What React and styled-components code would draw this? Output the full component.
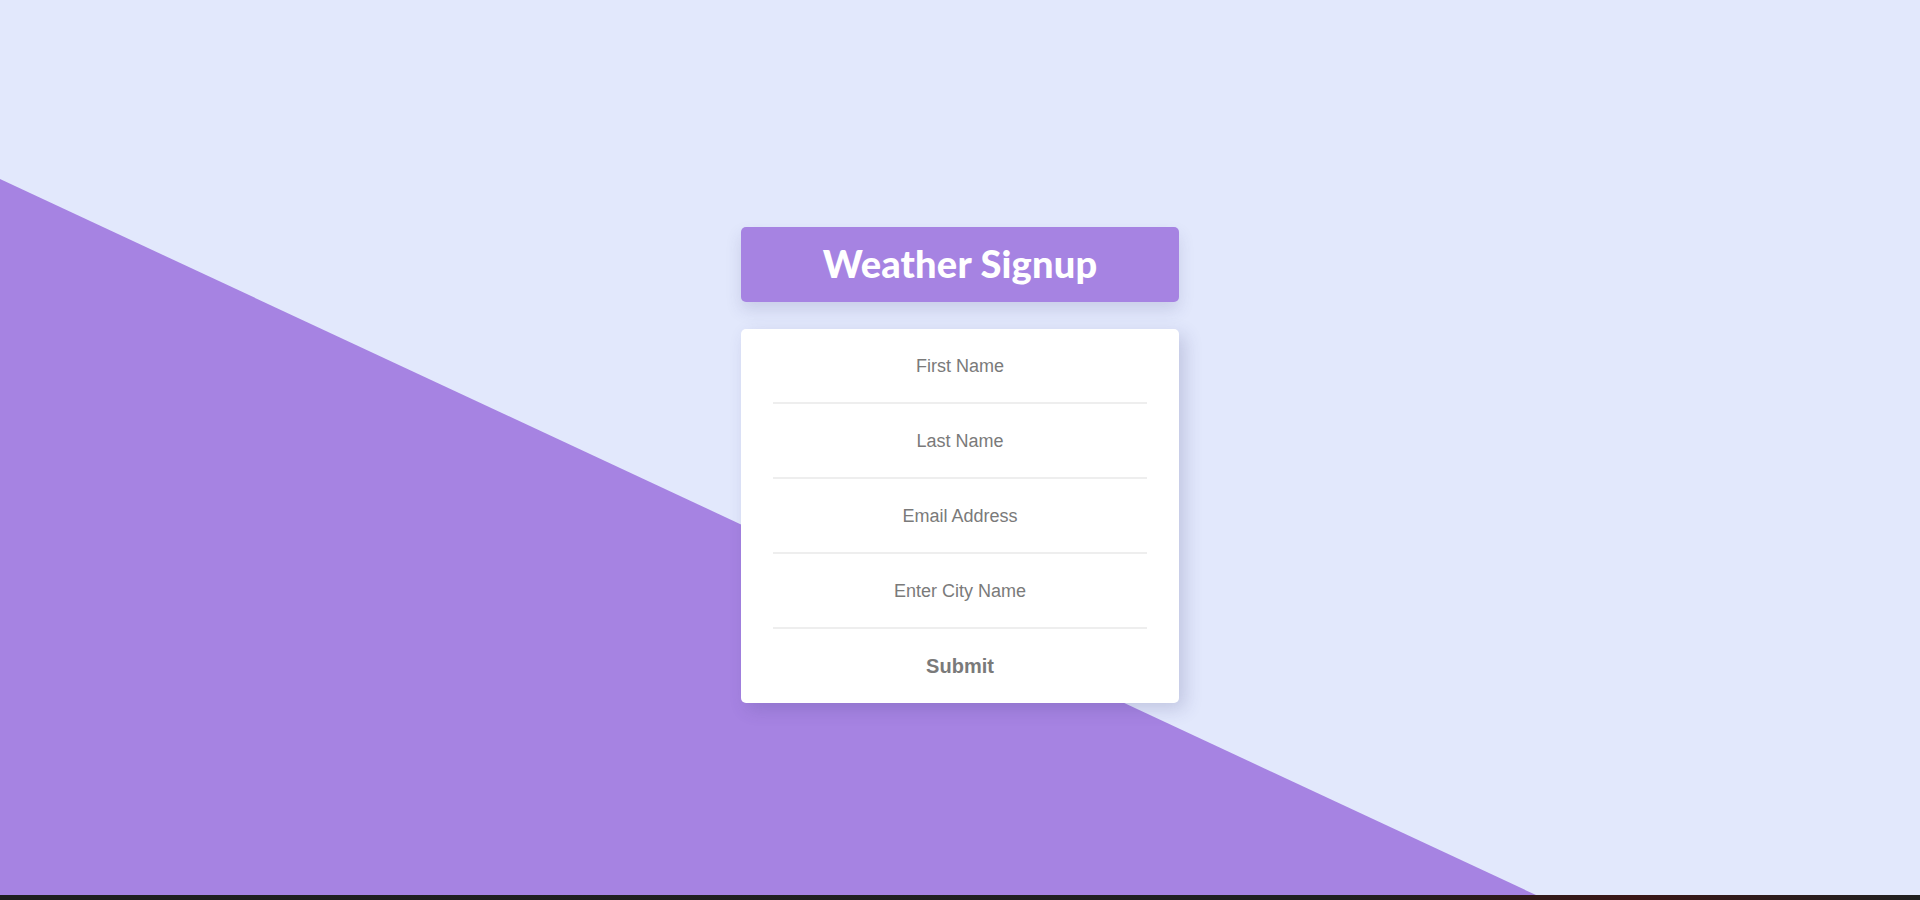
import React, { useState } from "react";
import styled, { createGlobalStyle } from "styled-components";

const GlobalStyle = createGlobalStyle`
    html, body {
        margin: 0;
        padding: 0;
        height: 100%;
        overflow: hidden;
    }
    #root {
        height: 100%;
    }
`;

export default function App() {
    const [data, setData] = useState({ first: "", last: "", email: "", city: "" });
    const changing = (e) => setData({ ...data, [e.target.name]: e.target.value });

    return (
        <Page>
            <GlobalStyle />
            <Main>
                <Backdrop />
                <Content>
                    <TitleBox>
                        <Title>Weather Signup</Title>
                    </TitleBox>
                    <Form onSubmit={(e) => e.preventDefault()}>
                        <Field name="first" placeholder="First Name" value={data.first} onChange={changing} />
                        <Field name="last" placeholder="Last Name" value={data.last} onChange={changing} />
                        <Field name="email" placeholder="Email Address" value={data.email} onChange={changing} />
                        <Field name="city" placeholder="Enter City Name" value={data.city} onChange={changing} />
                        <SubmitBtn type="submit">Submit</SubmitBtn>
                    </Form>
                </Content>
            </Main>
            <TaskStrip />
        </Page>
    );
}

const Page = styled.div`
    display: flex;
    flex-direction: column;
    height: 100vh;
`;

const Main = styled.main`
    position: relative;
    flex: 1;
    background-color: #e2e8fc;
    overflow: hidden;
`;

const Backdrop = styled.div`
    position: absolute;
    inset: 0;
    background-color: #a683e2;
    clip-path: polygon(0 20%, 80% 100%, 0 100%);
`;

const Content = styled.div`
    position: relative;
    display: flex;
    flex-direction: column;
    align-items: center;
    padding-top: 227px;
    gap: 27px;
`;

const TitleBox = styled.div`
    width: 438px;
    height: 75px;
    box-sizing: border-box;
    padding-bottom: 4px;
    display: flex;
    align-items: center;
    justify-content: center;
    background-color: #a683e2;
    border-radius: 5px;
    box-shadow: 0 8px 16px rgba(60, 60, 120, 0.15);
`;

const Title = styled.h1`
    margin: 0;
    font-family: "Lato", "DejaVu Sans", sans-serif;
    font-weight: 900;
    font-size: 38px;
    color: white;
    letter-spacing: 0.2px;
`;

const Form = styled.form`
    width: 438px;
    box-sizing: border-box;
    padding: 0 32px;
    display: flex;
    flex-direction: column;
    background-color: white;
    border-radius: 5px;
    box-shadow: 6px 6px 18px rgba(60, 60, 120, 0.2);
`;

const Field = styled.input`
    height: 75px;
    padding-top: 3px;
    box-sizing: border-box;
    border: none;
    border-bottom: 2px solid #eeeeee;
    outline: none;
    text-align: center;
    font-family: "Liberation Sans", Arial, sans-serif;
    font-size: 18px;
    color: #555;
    background: transparent;
    &::placeholder {
        color: #7a7a7a;
    }
`;

const SubmitBtn = styled.button`
    height: 74px;
    border: none;
    background: transparent;
    font-family: "Liberation Sans", Arial, sans-serif;
    font-weight: bold;
    font-size: 20px;
    color: #7a7a7a;
    cursor: pointer;
`;

const TaskStrip = styled.div`
    height: 5px;
    background: linear-gradient(90deg, #1f1f1f 0%, #202020 70%, #3a1616 85%, #202020 100%);
`;
